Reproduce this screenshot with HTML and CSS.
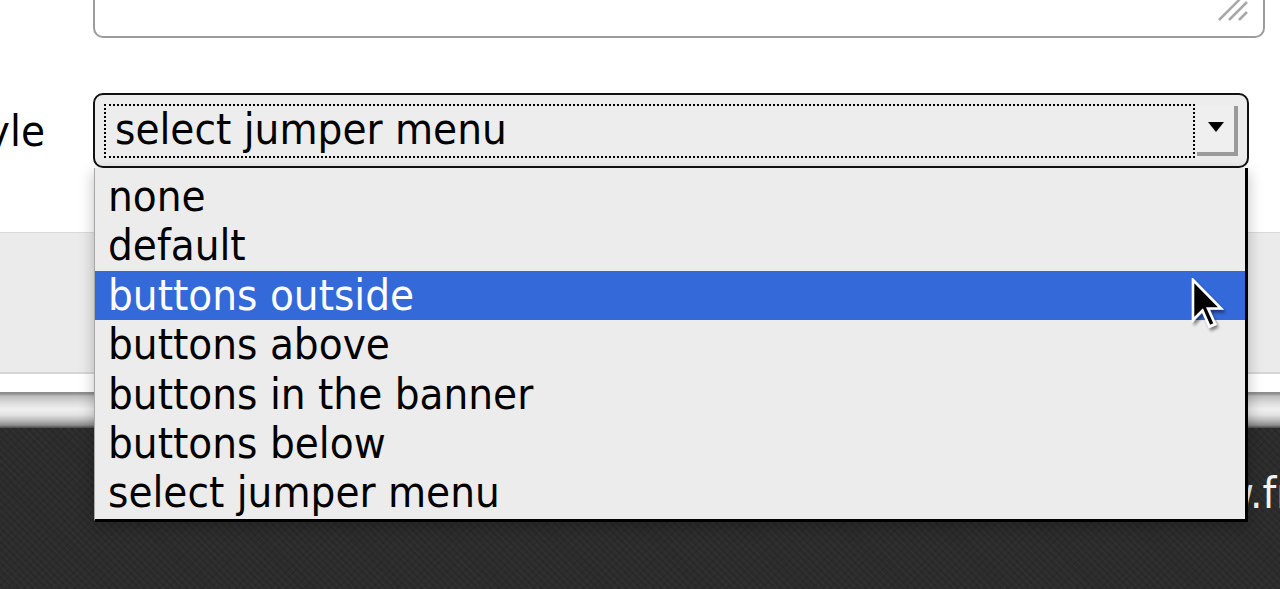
FILE: index.html
```html
<!DOCTYPE html>
<html>
<head>
<meta charset="utf-8">
<link rel="stylesheet" href="styles.css">
</head>
<body>
<div class="page">
  <div class="form">
    <div class="row-textarea">
      <div class="textarea">
        <svg class="grip" width="36" height="24" viewBox="0 0 36 24">
          <path d="M6 22 L28 0 M16 22 L34 4 M26 22 L34 14" stroke="#a8a8a8" stroke-width="2.5" fill="none"/>
        </svg>
      </div>
    </div>
    <div class="row-select">
      <div class="label">Style</div>
      <div class="select">
        <div class="focus">select jumper menu</div>
        <div class="arrow-btn"><span class="tri"></span></div>
      </div>
    </div>
  </div>
  <div class="band"></div>
  <div class="strip"></div>
  <div class="rail"></div>
  <div class="footer"><span class="url">www.freedomvoice.com</span></div>

  <ul class="menu">
    <li>none</li>
    <li>default</li>
    <li class="sel">buttons outside</li>
    <li>buttons above</li>
    <li>buttons in the banner</li>
    <li>buttons below</li>
    <li>select jumper menu</li>
  </ul>
  <svg class="cursor" width="40" height="56" viewBox="0 0 40 56">
    <defs>
      <filter id="sh" x="-30%" y="-30%" width="160%" height="160%">
        <feGaussianBlur in="SourceAlpha" stdDeviation="1.6"/>
        <feOffset dx="1.5" dy="3" result="b"/>
        <feComponentTransfer><feFuncA type="linear" slope="0.45"/></feComponentTransfer>
        <feMerge><feMergeNode/><feMergeNode in="SourceGraphic"/></feMerge>
      </filter>
    </defs>
    <path filter="url(#sh)" d="M2 2 L2 42 L11.5 32.5 L18.5 48.5 L24 46 L17 30.5 L30 30.5 Z" fill="#000" stroke="#fff" stroke-width="2.6" stroke-linejoin="miter"/>
  </svg>
</div>
</body>
</html>
```

FILE: styles.css
```css
html, body {
  margin: 0;
  padding: 0;
}
body {
  width: 1280px;
  height: 589px;
  overflow: hidden;
  background: #fff;
  font-family: "DejaVu Sans Condensed", "DejaVu Sans", sans-serif;
  color: #000;
}
.page {
  position: relative;
  width: 1280px;
  height: 589px;
  display: flex;
  flex-direction: column;
}
.form {
  height: 232px;
  display: flex;
  flex-direction: column;
}
.row-textarea {
  height: 40px;
  overflow: hidden;
  display: flex;
}
.textarea {
  position: relative;
  margin-left: 93px;
  margin-top: -30px;
  width: 1168px;
  height: 64px;
  border: 2px solid #9c9c9c;
  border-radius: 10px;
  background: #fff;
}
.grip {
  position: absolute;
  right: 14px;
  bottom: 14px;
}
.row-select {
  margin-top: 53px;
  display: flex;
  align-items: center;
}
.label {
  width: 93px;
  box-sizing: border-box;
  padding-right: 48px;
  text-align: right;
  font-size: 43.5px;
  white-space: nowrap;
  direction: rtl;
}
.select {
  width: 1134px;
  height: 71px;
  border: 2px solid #111;
  border-radius: 10px;
  background: #ededed;
  display: flex;
  align-items: center;
  padding: 0 9px;
  box-sizing: content-box;
}
.focus {
  flex: 1;
  border: 2px dotted #000;
  display: flex;
  align-items: center;
  padding-left: 9px;
  font-size: 43.5px;
  line-height: 1;
  padding-bottom: 2px;
  box-sizing: border-box;
  height: 54px;
}
.arrow-btn {
  width: 41px;
  height: 50px;
  margin-left: 2px;
  box-sizing: border-box;
  background: #efefef;
  border-right: 4px solid #9a9a9a;
  border-bottom: 4px solid #9a9a9a;
  display: flex;
  align-items: center;
  justify-content: center;
}
.tri {
  width: 0;
  height: 0;
  border-left: 8px solid transparent;
  border-right: 8px solid transparent;
  border-top: 10px solid #000;
  margin-top: -4px;
}
.band {
  height: 139px;
  background: #ebebeb;
  border-top: 1px solid #dadada;
  border-bottom: 2px solid #d6d6d6;
}
.strip {
  height: 18px;
  background: #fff;
}
.rail {
  height: 36px;
  background: linear-gradient(#8a8a8a 0, #949494 2px, #bdbdbd 4px, #d8d8d8 10px, #efefef 17px, #e2e2e2 23px, #bcbcbc 28px, #8f8f8f 33px, #4a4a4a 36px);
}
.footer {
  flex: 1;
  background-color: #2b2b2b;
  background-image:
    repeating-linear-gradient(45deg, rgba(255,255,255,0.025) 0 2px, transparent 2px 5px),
    repeating-linear-gradient(-45deg, rgba(0,0,0,0.08) 0 2px, transparent 2px 6px);
  padding-left: 1158px;
  padding-top: 40px;
  white-space: nowrap;
  overflow: hidden;
}
.url {
  color: #f2f2f2;
  font-size: 43.5px;
}
.menu {
  position: absolute;
  left: 94px;
  top: 168px;
  width: 1150px;
  height: 347px;
  margin: 0;
  padding: 4px 0 0 0;
  list-style: none;
  background: #ececec;
  border-left: 1px solid #a8a8a8;
  border-right: 3px solid #000;
  border-bottom: 3px solid #000;
  box-shadow: 0 4px 14px rgba(0,0,0,0.25);
}
.menu li {
  height: 49.4px;
  padding-left: 13px;
  font-size: 43.5px;
  line-height: 49px;
  white-space: nowrap;
}
.menu li.sel {
  background: #3369d8;
  color: #fff;
}
.cursor {
  position: absolute;
  left: 1191px;
  top: 278px;
}
```
